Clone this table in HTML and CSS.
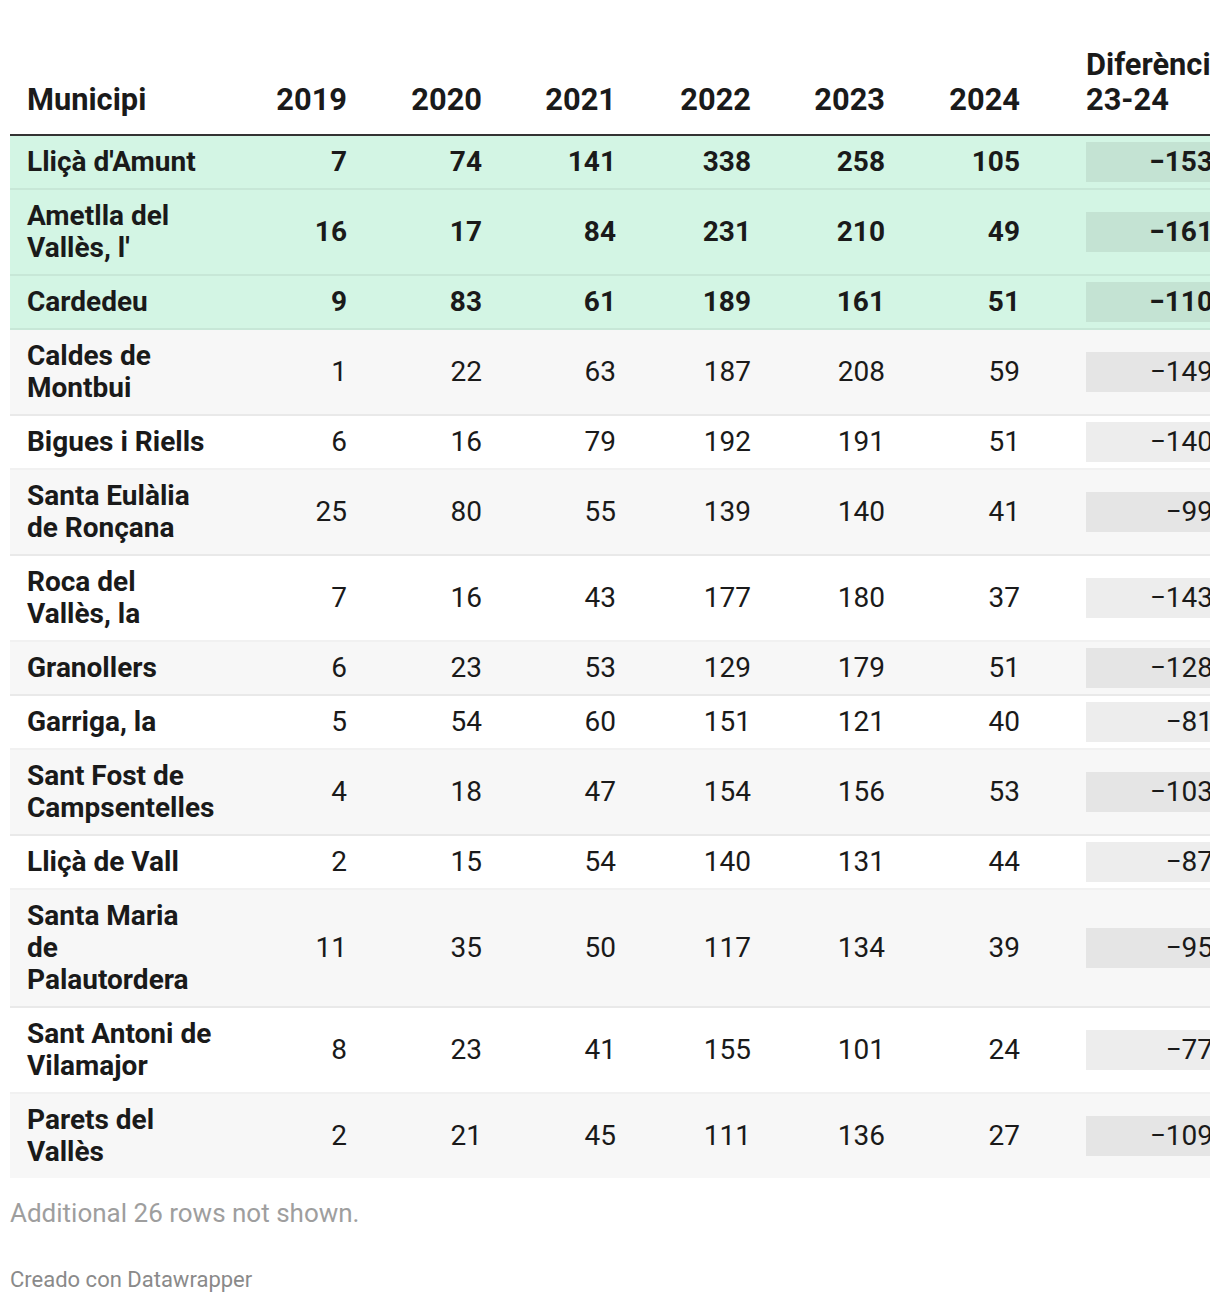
FILE: index.html
```html
<!DOCTYPE html>
<html lang="ca">
<head>
<meta charset="utf-8">
<title>Taula</title>
<link rel="stylesheet" href="styles.css">
</head>
<body>
<div class="chart">
  <div class="table-wrap">
    <table class="dw-table">
      <colgroup>
        <col class="c-name"><col class="c-first"><col class="c-wide"><col class="c-narrow"><col class="c-wide"><col class="c-narrow"><col class="c-wide"><col class="c-diff">
      </colgroup>
      <thead>
        <tr>
          <th class="name">Municipi</th>
          <th class="num">2019</th>
          <th class="num">2020</th>
          <th class="num">2021</th>
          <th class="num">2022</th>
          <th class="num">2023</th>
          <th class="num">2024</th>
          <th class="diff-h">Diferència 23-24</th>
        </tr>
      </thead>
      <tbody>
        <tr class="hl"><td class="name">Lliçà d'Amunt</td><td class="num">7</td><td class="num">74</td><td class="num">141</td><td class="num">338</td><td class="num">258</td><td class="num">105</td><td class="diff"><div class="bar">−153</div></td></tr>
        <tr class="hl"><td class="name">Ametlla del Vallès, l'</td><td class="num">16</td><td class="num">17</td><td class="num">84</td><td class="num">231</td><td class="num">210</td><td class="num">49</td><td class="diff"><div class="bar">−161</div></td></tr>
        <tr class="hl"><td class="name">Cardedeu</td><td class="num">9</td><td class="num">83</td><td class="num">61</td><td class="num">189</td><td class="num">161</td><td class="num">51</td><td class="diff"><div class="bar">−110</div></td></tr>
        <tr class="odd"><td class="name">Caldes de Montbui</td><td class="num">1</td><td class="num">22</td><td class="num">63</td><td class="num">187</td><td class="num">208</td><td class="num">59</td><td class="diff"><div class="bar">−149</div></td></tr>
        <tr><td class="name">Bigues i Riells</td><td class="num">6</td><td class="num">16</td><td class="num">79</td><td class="num">192</td><td class="num">191</td><td class="num">51</td><td class="diff"><div class="bar">−140</div></td></tr>
        <tr class="odd"><td class="name">Santa Eulàlia de Ronçana</td><td class="num">25</td><td class="num">80</td><td class="num">55</td><td class="num">139</td><td class="num">140</td><td class="num">41</td><td class="diff"><div class="bar">−99</div></td></tr>
        <tr><td class="name">Roca del Vallès, la</td><td class="num">7</td><td class="num">16</td><td class="num">43</td><td class="num">177</td><td class="num">180</td><td class="num">37</td><td class="diff"><div class="bar">−143</div></td></tr>
        <tr class="odd"><td class="name">Granollers</td><td class="num">6</td><td class="num">23</td><td class="num">53</td><td class="num">129</td><td class="num">179</td><td class="num">51</td><td class="diff"><div class="bar">−128</div></td></tr>
        <tr><td class="name">Garriga, la</td><td class="num">5</td><td class="num">54</td><td class="num">60</td><td class="num">151</td><td class="num">121</td><td class="num">40</td><td class="diff"><div class="bar">−81</div></td></tr>
        <tr class="odd"><td class="name">Sant Fost de Campsentelles</td><td class="num">4</td><td class="num">18</td><td class="num">47</td><td class="num">154</td><td class="num">156</td><td class="num">53</td><td class="diff"><div class="bar">−103</div></td></tr>
        <tr><td class="name">Lliçà de Vall</td><td class="num">2</td><td class="num">15</td><td class="num">54</td><td class="num">140</td><td class="num">131</td><td class="num">44</td><td class="diff"><div class="bar">−87</div></td></tr>
        <tr class="odd"><td class="name">Santa Maria de Palautordera</td><td class="num">11</td><td class="num">35</td><td class="num">50</td><td class="num">117</td><td class="num">134</td><td class="num">39</td><td class="diff"><div class="bar">−95</div></td></tr>
        <tr><td class="name">Sant Antoni de Vilamajor</td><td class="num">8</td><td class="num">23</td><td class="num">41</td><td class="num">155</td><td class="num">101</td><td class="num">24</td><td class="diff"><div class="bar">−77</div></td></tr>
        <tr class="odd last"><td class="name">Parets del Vallès</td><td class="num">2</td><td class="num">21</td><td class="num">45</td><td class="num">111</td><td class="num">136</td><td class="num">27</td><td class="diff"><div class="bar">−109</div></td></tr>
      </tbody>
    </table>
  </div>
  <p class="more">Additional 26 rows not shown.</p>
  <p class="credit">Creado con Datawrapper</p>
</div>
</body>
</html>
```
FILE: styles.css
```css
html, body {
  margin: 0;
  padding: 0;
  background: #ffffff;
}

body {
  font-family: Roboto, "Liberation Sans", Arial, sans-serif;
  color: #1a1a1a;
}

.chart {
  padding: 37px 10px 0 10px;
}

.table-wrap {
  overflow: hidden;
  width: 1200px;
}

.dw-table {
  table-layout: fixed;
  width: 1206px;
  border-collapse: separate;
  border-spacing: 0;
}

.c-name { width: 222px; }
.c-first { width: 132px; }
.c-wide { width: 135px; }
.c-narrow { width: 134px; }
.c-diff { width: 179px; }

th {
  font-size: 30.8px;
  font-weight: 700;
  line-height: 35px;
  vertical-align: bottom;
  padding: 10px 17px 17px 0;
  border-bottom: 2px solid #333333;
  text-align: right;
}

th.name {
  text-align: left;
  padding-left: 17px;
}

th.diff-h {
  text-align: left;
  padding-left: 49px;
  padding-right: 0;
}

td {
  font-size: 28px;
  line-height: 32px;
  padding: 10px 17px 10px 0;
  border-bottom: 2px solid rgba(0, 0, 0, 0.055);
  vertical-align: middle;
  font-weight: 400;
}

tr.last td {
  border-bottom: 0;
}

td.name {
  font-weight: 700;
  text-align: left;
  padding-left: 17px;
}

td.num {
  text-align: right;
}

td.diff {
  padding: 6px 0 6px 49px;
}

.bar {
  height: 40px;
  line-height: 40px;
  width: 130px;
  box-sizing: border-box;
  padding-right: 3px;
  text-align: right;
  background: rgba(0, 0, 0, 0.07);
  white-space: nowrap;
}

tr.odd td {
  background: #f7f7f7;
}

tr.hl td {
  background: #d3f5e4;
  font-weight: 700;
}

.more {
  margin: 20px 0 0 0;
  font-size: 26px;
  line-height: 31px;
  color: #9e9e9e;
}

.credit {
  margin: 38px 0 0 0;
  font-size: 22px;
  line-height: 26px;
  color: #8a8a8a;
}
```
